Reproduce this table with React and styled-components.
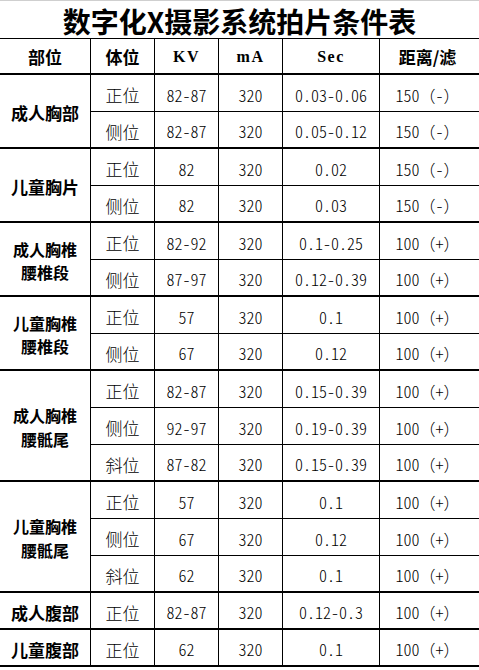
import React from "react";
import styled, { createGlobalStyle } from "styled-components";

const GlobalStyle = createGlobalStyle`
  html, body { margin: 0; padding: 0; background: #fff; }
  body { font-family: "Noto Sans CJK SC", sans-serif; color: #000; }
`;

const Sheet = styled.div`
  width: 479px;
  height: 670px;
  overflow: hidden;
  box-sizing: border-box;
  border-top: 1px solid #cfcfcf;
  background: #fff;
`;

const Title = styled.h1`
  margin: 0;
  height: 37px;
  display: flex;
  align-items: center;
  justify-content: center;
  padding-top: 3px;
  box-sizing: border-box;
  font-family: "Noto Sans CJK SC", sans-serif;
  font-weight: 600;
  font-size: 28px;
  line-height: 1;
  color: #000;
`;

const Grid = styled.div`
  display: grid;
  grid-template-columns: 91px 64px 64px 64px 97px 99px;
  grid-template-rows: 36px;
  grid-auto-rows: 37px;
  border-top: 1px solid #000;
`;

const Cell = styled.div`
  box-sizing: border-box;
  display: flex;
  align-items: center;
  justify-content: center;
  border-right: ${(p) => (p.$last ? "none" : "1px solid #000")};
  border-bottom: ${(p) => (p.$thick ? 2 : 1)}px solid #000;
  padding-right: ${(p) => (p.$last ? "4px" : "0")};
  color: #000;
  white-space: nowrap;
`;

const HeadCell = styled(Cell)`
  font-family: ${(p) =>
    p.$latin ? '"Liberation Serif", serif' : '"Noto Sans CJK SC", sans-serif'};
  font-weight: 700;
  font-size: ${(p) => (p.$latin ? "16px" : "17px")};
  letter-spacing: ${(p) => (p.$latin ? "1.5px" : "0")};
  padding-top: 1px;
`;

const GroupCell = styled(Cell)`
  grid-column: 1;
  grid-row: span ${(p) => p.$span};
  flex-direction: column;
  font-family: "Noto Sans CJK SC", sans-serif;
  font-weight: 700;
  font-size: ${(p) => (p.$lines > 1 ? "16px" : "17px")};
  line-height: 23.5px;
  padding-top: 4px;
`;

const PoseCell = styled(Cell)`
  grid-column: 2;
  font-family: "Noto Sans CJK SC", sans-serif;
  font-weight: 300;
  font-size: 17px;
  padding-top: 3px;
`;

const NumCell = styled(Cell)`
  font-family: "Noto Sans CJK SC", sans-serif;
  font-weight: 300;
  font-size: 16px;
  padding-top: 3px;
`;

const Half = styled.span`
  font-feature-settings: "hwid" 1;
`;

function mixed(text) {
  const parts = text.match(/[\x20-\x7e]+|[^\x20-\x7e]+/g) || [];
  return parts.map((p, i) =>
    /^[\x20-\x7e]+$/.test(p) ? <Half key={i}>{p}</Half> : <span key={i}>{p}</span>
  );
}

const headers = [
  { t: "部位" },
  { t: "体位" },
  { t: "KV", latin: true },
  { t: "mA", latin: true },
  { t: "Sec", latin: true },
  { t: "距离/滤" },
];

const groups = [
  {
    name: ["成人胸部"],
    rows: [
      ["正位", "82-87", "320", "0.03-0.06", "150（-）"],
      ["侧位", "82-87", "320", "0.05-0.12", "150（-）"],
    ],
  },
  {
    name: ["儿童胸片"],
    rows: [
      ["正位", "82", "320", "0.02", "150（-）"],
      ["侧位", "82", "320", "0.03", "150（-）"],
    ],
  },
  {
    name: ["成人胸椎", "腰椎段"],
    rows: [
      ["正位", "82-92", "320", "0.1-0.25", "100（+）"],
      ["侧位", "87-97", "320", "0.12-0.39", "100（+）"],
    ],
  },
  {
    name: ["儿童胸椎", "腰椎段"],
    rows: [
      ["正位", "57", "320", "0.1", "100（+）"],
      ["侧位", "67", "320", "0.12", "100（+）"],
    ],
  },
  {
    name: ["成人胸椎", "腰骶尾"],
    rows: [
      ["正位", "82-87", "320", "0.15-0.39", "100（+）"],
      ["侧位", "92-97", "320", "0.19-0.39", "100（+）"],
      ["斜位", "87-82", "320", "0.15-0.39", "100（+）"],
    ],
  },
  {
    name: ["儿童胸椎", "腰骶尾"],
    rows: [
      ["正位", "57", "320", "0.1", "100（+）"],
      ["侧位", "67", "320", "0.12", "100（+）"],
      ["斜位", "62", "320", "0.1", "100（+）"],
    ],
  },
  {
    name: ["成人腹部"],
    rows: [["正位", "82-87", "320", "0.12-0.3", "100（+）"]],
  },
  {
    name: ["儿童腹部"],
    rows: [["正位", "62", "320", "0.1", "100（+）"]],
  },
];

export default function App() {
  return (
    <>
      <GlobalStyle />
      <Sheet>
        <Title>数字化X摄影系统拍片条件表</Title>
        <Grid>
          {headers.map((h, i) => (
            <HeadCell key={h.t} $thick $latin={h.latin} $last={i === headers.length - 1}>
              {h.t}
            </HeadCell>
          ))}
          {groups.map((g, gi) => (
            <React.Fragment key={gi}>
              <GroupCell $span={g.rows.length} $lines={g.name.length} $thick>
                {g.name.map((n) => (
                  <span key={n}>{n}</span>
                ))}
              </GroupCell>
              {g.rows.map((r, ri) => {
                const thick = ri === g.rows.length - 1;
                return (
                  <React.Fragment key={ri}>
                    <PoseCell $thick={thick}>{r[0]}</PoseCell>
                    {r.slice(1).map((v, vi) => (
                      <NumCell key={vi} $thick={thick} $last={vi === 3}>
                        {mixed(v)}
                      </NumCell>
                    ))}
                  </React.Fragment>
                );
              })}
            </React.Fragment>
          ))}
        </Grid>
      </Sheet>
    </>
  );
}
